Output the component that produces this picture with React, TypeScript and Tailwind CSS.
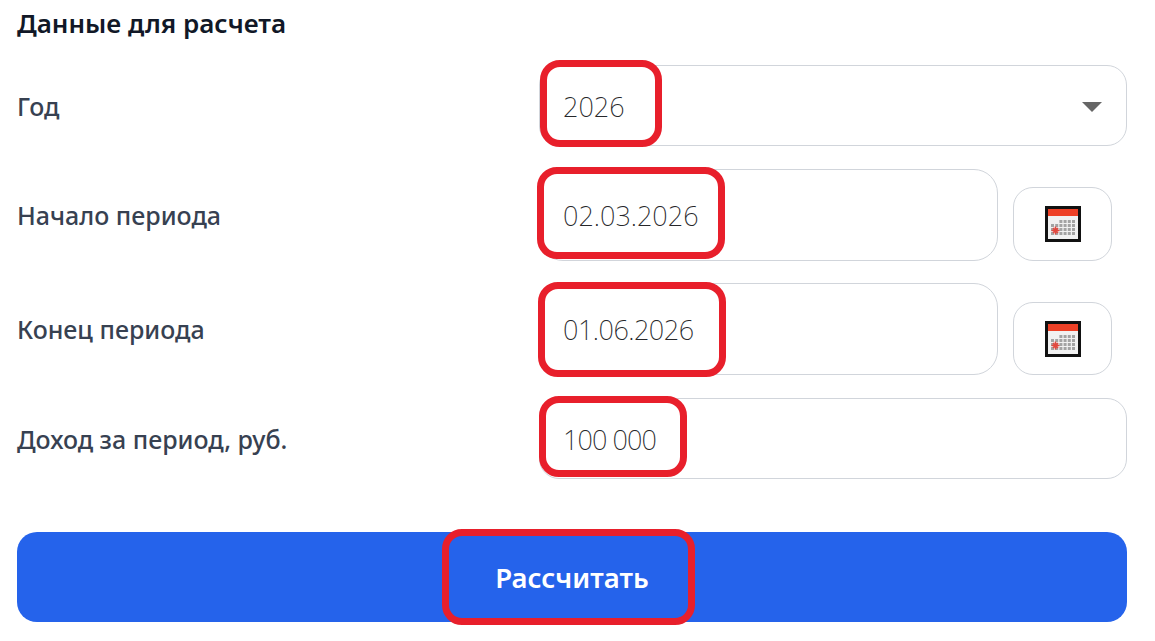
const FONT = "font-['Noto_Sans','Open_Sans',sans-serif]"

function CalendarIcon() {
  return (
    <svg width="36" height="36" viewBox="0 0 36 36" aria-hidden="true">
      <rect x="0" y="0" width="36" height="36" fill="#111" />
      <rect x="3" y="3" width="30" height="30" fill="#f1f1f1" />
      <rect x="3" y="3" width="30" height="7" fill="#ee4026" />
      {[0, 1, 2, 3].map((r) =>
        [0, 1, 2, 3, 4, 5].map((c) =>
          r < 1 && c < 2 ? null : (
            <rect key={`${r}-${c}`} x={6 + c * 4.2} y={14 + r * 4} width="3" height="3" fill="#a3a3a3" />
          ),
        ),
      )}
      <path d="M6.5 24.5h8M10.5 20.5v8M8 22l5 5M13 22l-5 5" stroke="#e2483f" strokeWidth="1.6" />
    </svg>
  )
}

function Mark({ className }: { className: string }) {
  return <div className={`absolute rounded-[20px] border-[7px] border-[#e81f2b] ${className}`} />
}

function Label({ children }: { children: string }) {
  return <div className="w-[522px] shrink-0 pt-[2px] text-[25px] font-[550] text-[#374151]">{children}</div>
}

function DateRow({ label, value, mark, mt, tight, btn }: { label: string; value: string; mark: string; mt: string; tight?: boolean; btn: string }) {
  return (
    <div className={`relative flex items-center ${mt}`}>
      <Label>{label}</Label>
      <div className={`flex h-[92px] w-[459px] items-center rounded-[24px] border border-[#d1d5db] pl-[23px] pt-[3px] text-[27px] font-extralight text-[#27272a] ${tight ? "tracking-[-0.5px]" : ""}`}>
        {value}
      </div>
      <button className={`ml-[15px] flex w-[99px] items-center justify-center rounded-[20px] border border-[#d1d5db] bg-white ${btn}`}>
        <CalendarIcon />
      </button>
      <Mark className={mark} />
    </div>
  )
}

export default function App() {
  return (
    <div className={`h-[641px] w-[1155px] overflow-hidden bg-white pl-[17px] pr-[28px] ${FONT}`}>
      <h2 className="flex h-[47px] items-center text-[26px] font-semibold text-[#111827]">Данные для расчета</h2>

      <div className="relative mt-[18px] flex items-center">
        <Label>Год</Label>
        <div className="flex h-[81px] flex-1 items-center justify-between rounded-[20px] border border-[#d1d5db] pl-[23px] pr-[24px] pt-[3px] text-[27px] font-extralight text-[#27272a]">
          2026
          <span className="h-0 w-0 border-x-[10px] border-t-[10px] border-x-transparent border-t-[#666]" />
        </div>
        <Mark className="left-[523px] top-[-5px] h-[87px] w-[122px]" />
      </div>

      <DateRow label="Начало периода" value="02.03.2026" mt="mt-[23px]" btn="mt-[18px] h-[74px]" mark="left-[520px] top-[-2px] h-[92px] w-[188px]" />
      <DateRow label="Конец периода" value="01.06.2026" mt="mt-[22px]" tight btn="mt-[19px] h-[73px]" mark="left-[521px] top-[-1px] h-[95px] w-[188px]" />

      <div className="relative mt-[23px] flex items-center">
        <Label>Доход за период, руб.</Label>
        <div className="flex h-[81px] flex-1 items-center rounded-[20px] border border-[#d1d5db] pl-[23px] pt-[3px] text-[27px] font-extralight tracking-[-0.9px] text-[#27272a]">
          100 000
        </div>
        <Mark className="left-[522px] top-[-2px] h-[81px] w-[148px]" />
      </div>

      <div className="relative mt-[53px]">
        <button className="flex h-[90px] w-full items-center justify-center rounded-[20px] bg-[#2563eb] pt-[2px] text-[27.5px] font-semibold text-white">
          Рассчитать
        </button>
        <Mark className="left-[425px] top-[-3px] h-[96px] w-[253px]" />
      </div>
    </div>
  )
}
